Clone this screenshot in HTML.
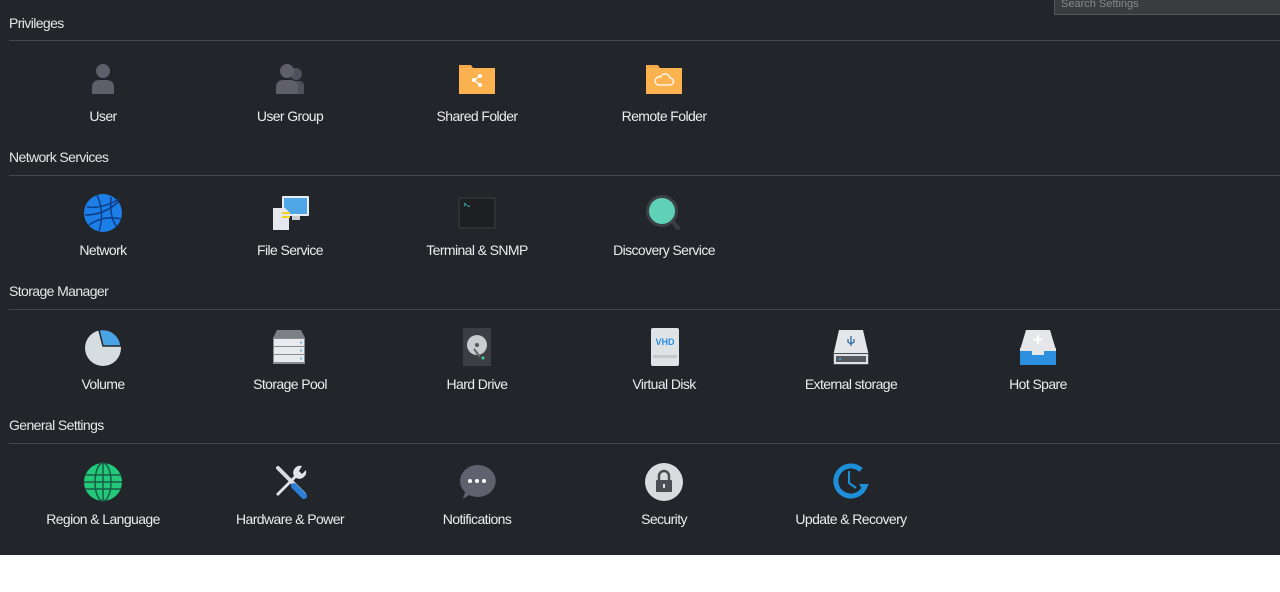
<!DOCTYPE html>
<html><head><meta charset="utf-8"><style>
body{margin:0;width:1280px;height:592px;background:#fff;position:relative;overflow:hidden;font-family:"Liberation Sans",sans-serif}
#dark{position:absolute;left:0;top:0;width:1280px;height:555px;background:#222529}
.h{position:absolute;left:9px;color:#e6e6e6;font-size:14px;letter-spacing:-0.6px}
.ln{position:absolute;left:9px;right:0;height:1px;background:#44484d}
.lb{position:absolute;width:180px;margin-left:-90px;text-align:center;color:#ececec;font-size:14px;letter-spacing:-0.6px}
svg.i{position:absolute;width:40px;height:40px;margin-left:-20px;margin-top:-20px}
#search{position:absolute;left:1054px;top:-4px;width:230px;height:17px;background:#3a3d40;border:1px solid #55595d;color:#888;font-size:11px;padding-left:6px;line-height:14px}
</style></head><body>
<div id="dark"></div>
<div id="search">Search Settings</div>

<div class="h" style="top:15px">Privileges</div><div class="ln" style="top:40px"></div>
<div class="h" style="top:149px">Network Services</div><div class="ln" style="top:175px"></div>
<div class="h" style="top:283px">Storage Manager</div><div class="ln" style="top:309px"></div>
<div class="h" style="top:417px">General Settings</div><div class="ln" style="top:443px"></div>

<!-- Row 1 -->
<svg class="i" style="left:103px;top:79px" viewBox="0 0 40 40"><circle cx="20" cy="12" r="7" fill="#5e5f6b"/><path d="M9 35v-7q0-7 8-7h6q8 0 8 7v7z" fill="#5e5f6b"/></svg>
<svg class="i" style="left:290px;top:79px" viewBox="0 0 40 40"><circle cx="26" cy="15" r="6" fill="#4f505b"/><path d="M22 35v-8q0-5 5-5h2q5 0 5 5v8z" fill="#4f505b"/><circle cx="17" cy="12" r="7" fill="#5e5f6b"/><path d="M6 35v-7q0-7 8-7h6q8 0 8 7v7z" fill="#5e5f6b"/></svg>
<svg class="i" style="left:477px;top:79px" viewBox="0 0 40 40"><path d="M2 6h12l2 3h22v26H2z" fill="#f7a94a"/><rect x="2" y="9" width="36" height="26" rx="1" fill="#fbb24f"/><g fill="#fff"><circle cx="23" cy="17" r="2"/><circle cx="17" cy="21" r="2"/><circle cx="23" cy="26" r="2"/></g><path d="M23 17L17 21L23 26" stroke="#fff" stroke-width="1.2" fill="none"/></svg>
<svg class="i" style="left:664px;top:79px" viewBox="0 0 40 40"><path d="M2 6h12l2 3h22v26H2z" fill="#f7a94a"/><rect x="2" y="9" width="36" height="26" rx="1" fill="#fbb24f"/><path d="M14 26h12a3.5 3.5 0 0 0 0-7a5 5 0 0 0-9.5-1a4 4 0 0 0-2.5 8z" fill="none" stroke="#fff" stroke-width="1.3"/></svg>
<div class="lb" style="left:103px;top:108px">User</div>
<div class="lb" style="left:290px;top:108px">User Group</div>
<div class="lb" style="left:477px;top:108px">Shared Folder</div>
<div class="lb" style="left:664px;top:108px">Remote Folder</div>

<!-- Row 2 -->
<svg class="i" style="left:103px;top:213px" viewBox="0 0 40 40"><circle cx="20" cy="20" r="19" fill="#1c7fe8"/><g stroke="#0b3f8c" stroke-width="1.6" fill="none"><path d="M4 14q16 2 32-8"/><path d="M2 22q20 0 34-14"/><path d="M6 32q14-10 32-6"/><path d="M14 2q8 18 2 36"/><path d="M28 4q-2 20 6 30"/></g></svg>
<svg class="i" style="left:290px;top:213px" viewBox="0 0 40 40"><rect x="12" y="3" width="27" height="20" rx="1" fill="#e8eef3"/><rect x="14" y="5" width="23" height="16" fill="#4fa6e6"/><rect x="22" y="23" width="8" height="4" fill="#ccc"/><path d="M3 15h12l4 4v18H3z" fill="#e6e6ee"/><path d="M12 20h8M12 24h8" stroke="#f0d020" stroke-width="2"/></svg>
<svg class="i" style="left:477px;top:213px" viewBox="0 0 40 40"><rect x="1" y="4" width="38" height="32" rx="2" fill="#2e3133"/><rect x="3" y="6" width="34" height="28" fill="#1d1f21"/><path d="M7 10l2 1.5L7 13M10 13h3" stroke="#35c6c0" stroke-width="1" fill="none"/></svg>
<svg class="i" style="left:664px;top:213px" viewBox="0 0 40 40"><path d="M28 28l6 7" stroke="#3a3d41" stroke-width="4" stroke-linecap="round"/><circle cx="18" cy="18" r="16" fill="#3d4145"/><circle cx="18" cy="18" r="13" fill="#5fd1b8"/></svg>
<div class="lb" style="left:103px;top:242px">Network</div>
<div class="lb" style="left:290px;top:242px">File Service</div>
<div class="lb" style="left:477px;top:242px">Terminal &amp; SNMP</div>
<div class="lb" style="left:664px;top:242px">Discovery Service</div>

<!-- Row 3 -->
<svg class="i" style="left:103px;top:347px" viewBox="0 0 40 40"><circle cx="20" cy="21" r="18" fill="#d6dde0"/><path d="M16 3a18 18 0 0 1 22 16H20z" fill="#4ba4e6" stroke="#222529" stroke-width="1.5"/></svg>
<svg class="i" style="left:290px;top:347px" viewBox="0 0 40 40"><path d="M7 3h24l4 8H3z" fill="#7d7f87"/><rect x="3" y="11" width="32" height="26" fill="#8a8c94"/><g fill="#e8eaee"><rect x="4" y="12" width="30" height="7"/><rect x="4" y="20" width="30" height="7"/><rect x="4" y="28" width="30" height="7"/></g><g fill="#4ba4e6"><circle cx="31" cy="15.5" r="1"/><circle cx="31" cy="23.5" r="1"/><circle cx="31" cy="31.5" r="1"/></g></svg>
<svg class="i" style="left:477px;top:347px" viewBox="0 0 40 40"><rect x="6" y="1" width="28" height="38" fill="#3b3e42"/><circle cx="20" cy="18" r="10" fill="#c9cdd0"/><circle cx="20" cy="18" r="2" fill="#555"/><path d="M17 22l6 8" stroke="#666" stroke-width="2"/><circle cx="26" cy="31" r="1.5" fill="#4c9"/></svg>
<svg class="i" style="left:664px;top:347px" viewBox="0 0 40 40"><rect x="7" y="1" width="28" height="38" rx="2" fill="#dfe3e6"/><rect x="9" y="28" width="24" height="3" fill="#c5c9cc"/><text x="21" y="18" font-size="9" font-weight="bold" fill="#2c8fe0" text-anchor="middle" font-family="Liberation Sans">VHD</text></svg>
<svg class="i" style="left:851px;top:347px" viewBox="0 0 40 40"><path d="M8 3h24l6 26H2z" fill="#e4e6e9"/><rect x="2" y="26" width="36" height="12" rx="1" fill="#4a4d52"/><rect x="3" y="27" width="34" height="10" fill="#dfe2e5"/><rect x="5" y="29" width="30" height="6" fill="#555a60"/><path d="M20 9v10M17 12v3l3 2 3-2v-3" stroke="#2c6ea8" stroke-width="1.3" fill="none"/><circle cx="9" cy="32" r="1" fill="#4ba4e6"/></svg>
<svg class="i" style="left:1038px;top:347px" viewBox="0 0 40 40"><path d="M8 3h24l6 20H2z" fill="#e4e6e9"/><rect x="2" y="21" width="36" height="17" fill="#e4e6e9"/><path d="M2 24h12v4h12v-4h12v14H2z" fill="#2c8fe0"/><path d="M20 8v9M15.5 12.5h9" stroke="#fff" stroke-width="2"/></svg>
<div class="lb" style="left:103px;top:376px">Volume</div>
<div class="lb" style="left:290px;top:376px">Storage Pool</div>
<div class="lb" style="left:477px;top:376px">Hard Drive</div>
<div class="lb" style="left:664px;top:376px">Virtual Disk</div>
<div class="lb" style="left:851px;top:376px">External storage</div>
<div class="lb" style="left:1038px;top:376px">Hot Spare</div>

<!-- Row 4 -->
<svg class="i" style="left:103px;top:482px" viewBox="0 0 40 40"><circle cx="20" cy="20" r="19" fill="#23c97a"/><g stroke="#1a5a45" stroke-width="1.5" fill="none"><ellipse cx="20" cy="20" rx="8" ry="19"/><path d="M20 1v38M2 13h36M1 20h38M2 27h36"/></g></svg>
<svg class="i" style="left:290px;top:482px" viewBox="0 0 40 40"><path d="M8 6l26 26" stroke="#d8dbe0" stroke-width="4" stroke-linecap="round"/><path d="M24 24l10 10" stroke="#2c7fd6" stroke-width="6" stroke-linecap="round"/><path d="M32 4a7 7 0 0 0-8 10L6 32l2 2 18-18a7 7 0 0 0 10-8l-4 4-3-3z" fill="#e0e3e7"/></svg>
<svg class="i" style="left:477px;top:482px" viewBox="0 0 40 40"><path d="M20 3a18 16 0 1 1-8 30l-6 4 2-7A18 16 0 0 1 20 3z" fill="#5f616e"/><g fill="#fff"><circle cx="13" cy="19" r="2"/><circle cx="20" cy="19" r="2"/><circle cx="27" cy="19" r="2"/></g></svg>
<svg class="i" style="left:664px;top:482px" viewBox="0 0 40 40"><circle cx="20" cy="20" r="19" fill="#d9dcdf"/><path d="M15 18v-4a5 5 0 0 1 10 0v4" stroke="#4a4d52" stroke-width="2.5" fill="none"/><rect x="12" y="18" width="16" height="12" rx="1" fill="#4a4d52"/><rect x="19" y="22" width="2" height="4" fill="#ddd"/></svg>
<svg class="i" style="left:851px;top:482px" viewBox="0 0 40 40"><path d="M30 8A15 15 0 1 0 34 24" stroke="#1e8fd8" stroke-width="5" fill="none"/><path d="M28 22l10 0-5 8z" fill="#1e8fd8"/><path d="M18 9v12l7 5" stroke="#1e8fd8" stroke-width="2" fill="none"/></svg>
<div class="lb" style="left:103px;top:511px">Region &amp; Language</div>
<div class="lb" style="left:290px;top:511px">Hardware &amp; Power</div>
<div class="lb" style="left:477px;top:511px">Notifications</div>
<div class="lb" style="left:664px;top:511px">Security</div>
<div class="lb" style="left:851px;top:511px">Update &amp; Recovery</div>
</body></html>
